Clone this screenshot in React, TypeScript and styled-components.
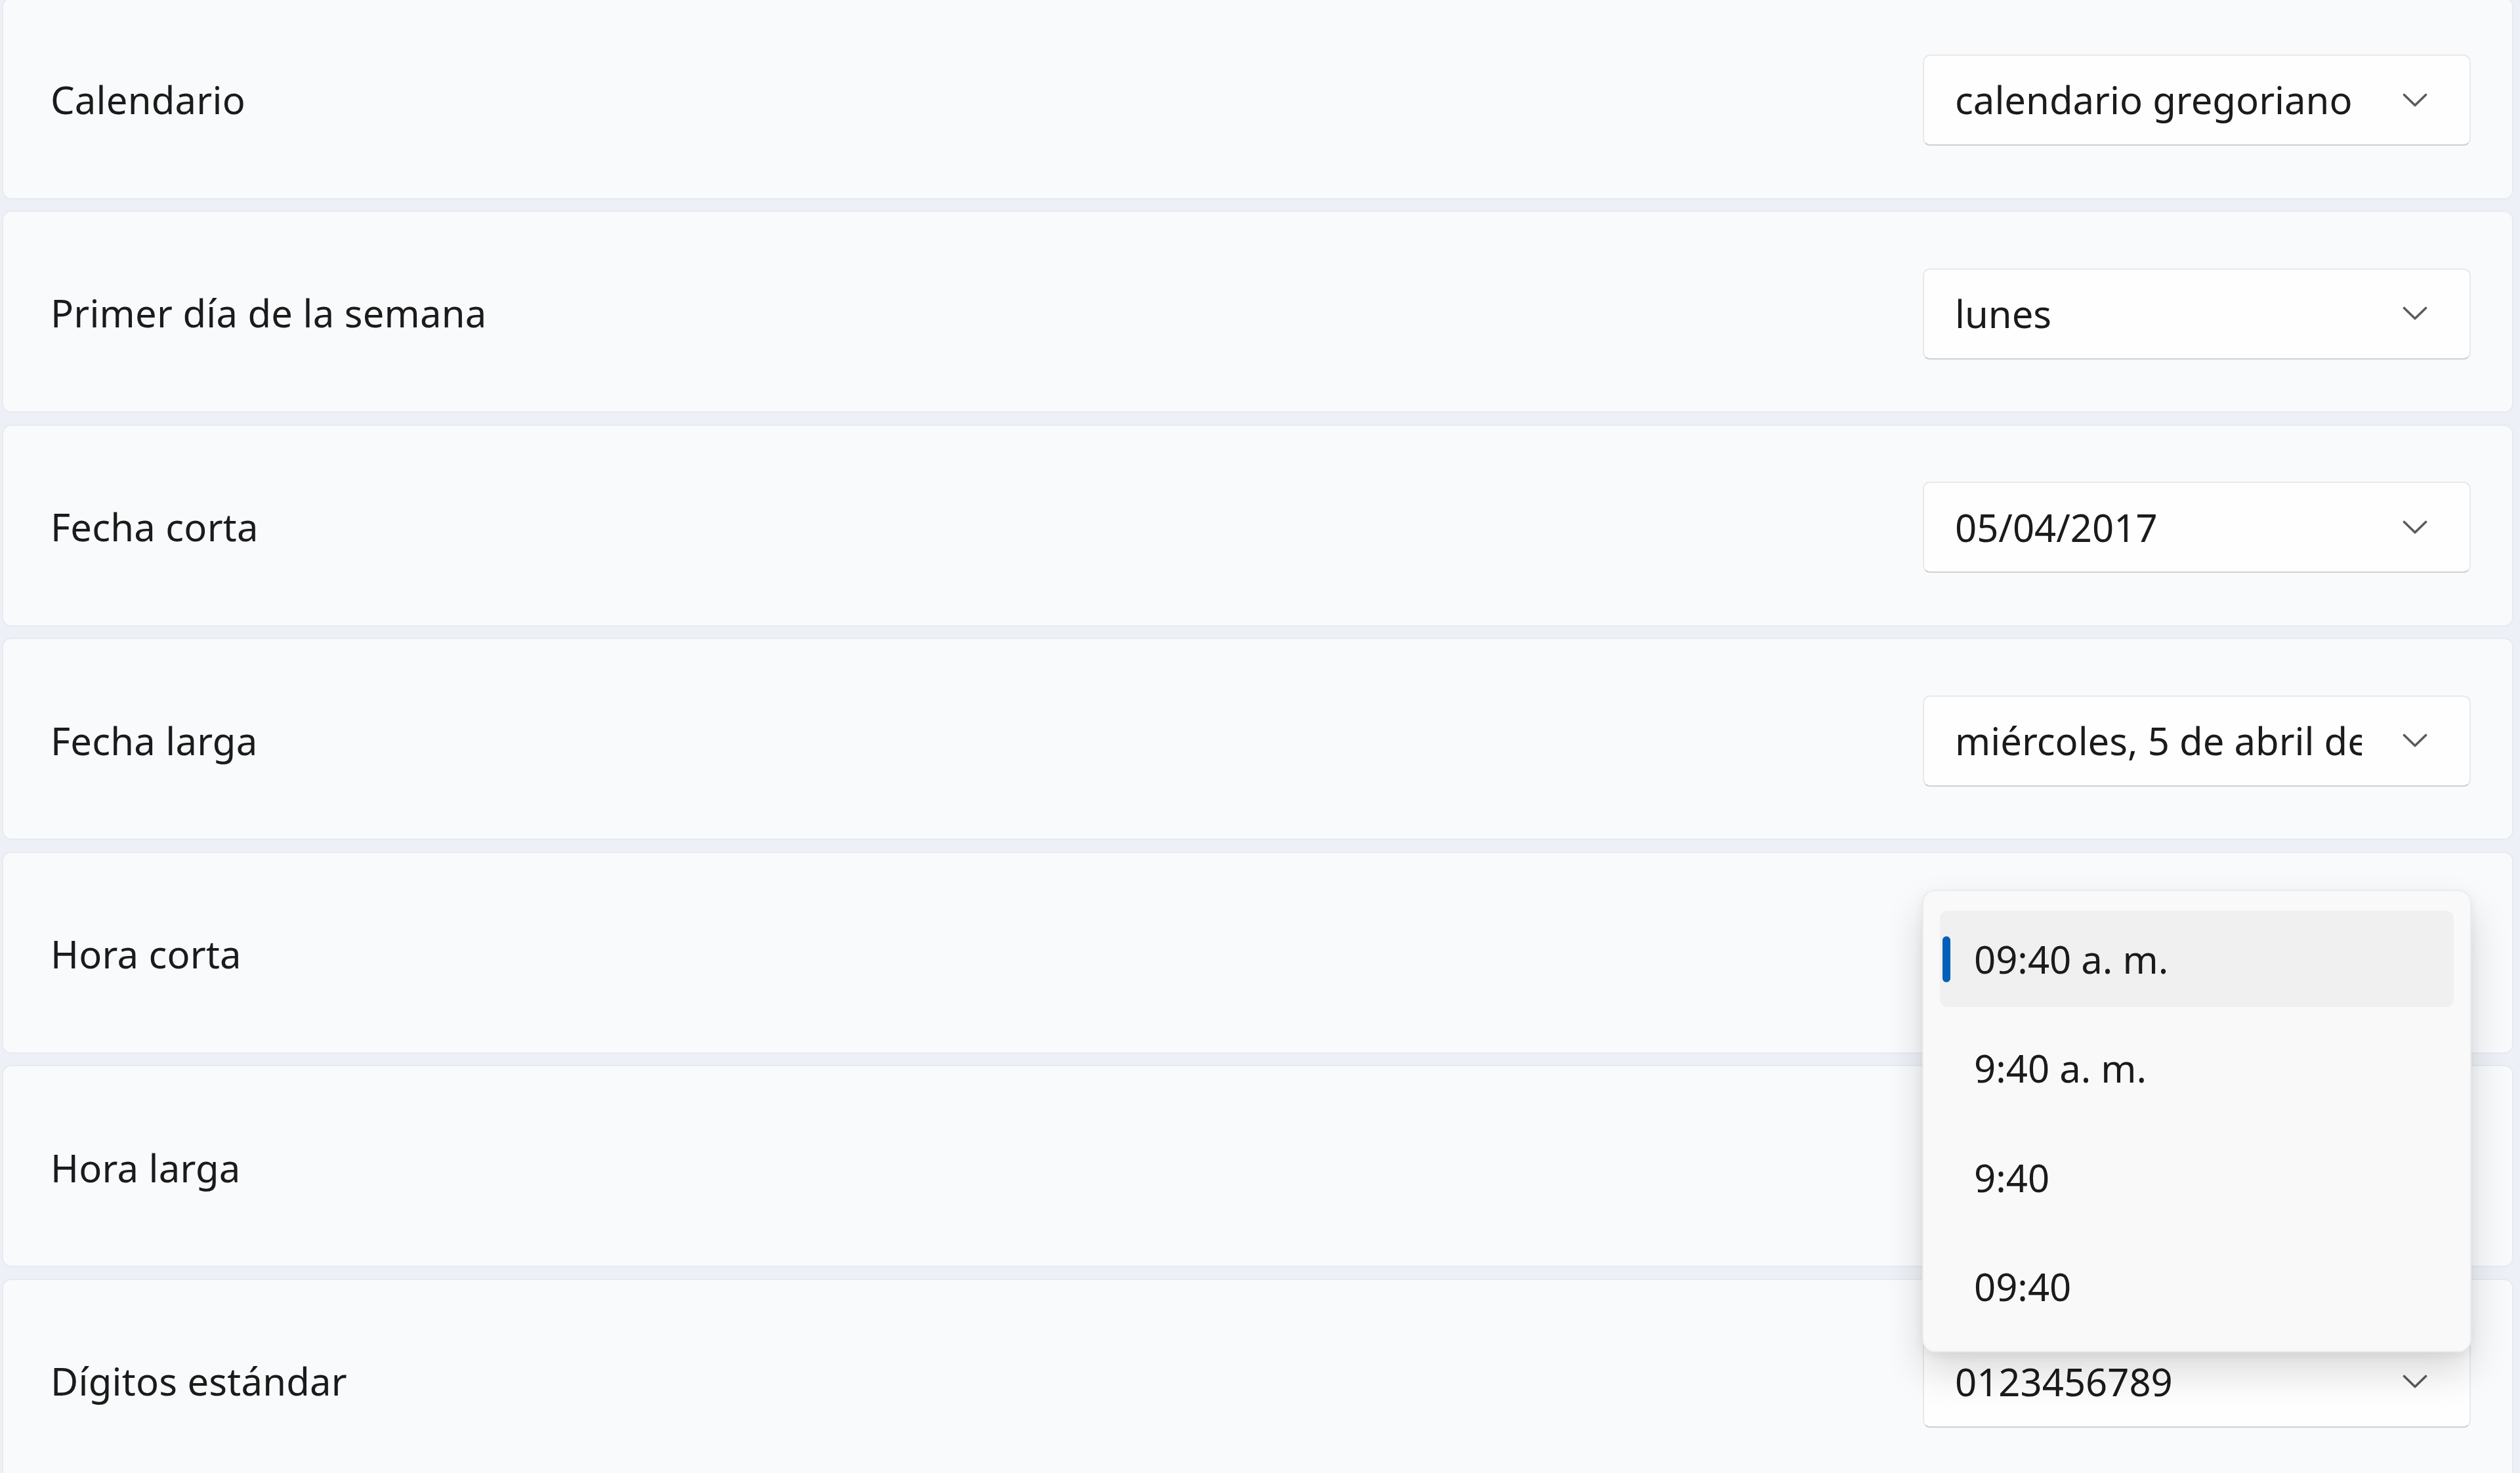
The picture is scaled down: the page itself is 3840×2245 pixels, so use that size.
import * as React from "react";
import styled, { createGlobalStyle } from "styled-components";

const Global = createGlobalStyle`
  html, body {
    margin: 0;
    padding: 0;
    background: #edf1f7;
    overflow: hidden;
  }
  body {
    font-family: "Noto Sans", "Open Sans", "Liberation Sans", sans-serif;
    color: #1b1b1b;
  }
`;

const Page = styled.div`
  width: 3840px;
  height: 2245px;
  overflow: hidden;
  box-sizing: border-box;
  padding: 0 10px 0 3px;
`;

const List = styled.div`
  display: flex;
  flex-direction: column;
  gap: 17.6px;
  margin-top: -4.5px;
`;

const Card = styled.div<{ $raised?: boolean }>`
  position: relative;
  z-index: ${(p) => (p.$raised ? 2 : 1)};
  height: 308px;
  box-sizing: border-box;
  display: flex;
  align-items: center;
  justify-content: space-between;
  padding: 0 63px 0 72px;
  background: #f9fafc;
  border: 2px solid #e7eaef;
  border-radius: 14px;
`;

const Label = styled.div`
  font-size: 58px;
  line-height: 1.3;
  letter-spacing: 0.2px;
  margin-top: 4px;
`;

const Anchor = styled.div`
  position: relative;
  margin-top: 6px;
`;

const Select = styled.div`
  width: 835px;
  height: 139px;
  box-sizing: border-box;
  display: flex;
  align-items: center;
  padding: 0 64px 0 47px;
  gap: 62px;
  background: #fefefe;
  border: 2px solid #e9e9e9;
  border-bottom-color: #d0d0d0;
  border-radius: 11px;
`;

const Value = styled.div`
  flex: 1;
  overflow: hidden;
  white-space: nowrap;
  font-size: 58px;
  line-height: 1.35;
`;

const Chevron = () => (
  <svg width="38" height="22" viewBox="0 0 38 22" fill="none">
    <path
      d="M2.5 2.5 L19 18.5 L35.5 2.5"
      stroke="#5b5b5b"
      strokeWidth="3.6"
      strokeLinecap="round"
      strokeLinejoin="round"
    />
  </svg>
);

const Menu = styled.div`
  position: absolute;
  top: -29px;
  left: -1px;
  width: 837px;
  height: 705px;
  box-sizing: border-box;
  padding: 30px 25px;
  display: flex;
  flex-direction: column;
  gap: 19.5px;
  background: #f9f9f9;
  border: 2px solid #ececec;
  border-radius: 20px;
  box-shadow: 0 30px 60px rgba(0, 0, 0, 0.14), 0 6px 16px rgba(0, 0, 0, 0.06);
`;

const Option = styled.div<{ $selected?: boolean }>`
  position: relative;
  height: 147px;
  flex: none;
  display: flex;
  align-items: center;
  padding-left: 52px;
  border-radius: 12px;
  background: ${(p) => (p.$selected ? "#f0f0f0" : "transparent")};
  font-size: 58px;
  line-height: 1;
`;

const Indicator = styled.span`
  position: absolute;
  left: 4px;
  top: 39px;
  width: 12px;
  height: 70px;
  border-radius: 6px;
  background: #005fb8;
`;

type Row = { label: string; value: string; menu?: string[] };

const rows: Row[] = [
  { label: "Calendario", value: "calendario gregoriano" },
  { label: "Primer día de la semana", value: "lunes" },
  { label: "Fecha corta", value: "05/04/2017" },
  { label: "Fecha larga", value: "miércoles, 5 de abril de 2017" },
  {
    label: "Hora corta",
    value: "09:40 a. m.",
    menu: ["09:40 a. m.", "9:40 a. m.", "9:40", "09:40"],
  },
  { label: "Hora larga", value: "09:40:00 a. m." },
  { label: "Dígitos estándar", value: "0123456789" },
];

export default function App() {
  return (
    <Page>
      <Global />
      <List>
        {rows.map((r) => (
          <Card key={r.label} $raised={!!r.menu}>
            <Label>{r.label}</Label>
            <Anchor>
              <Select>
                <Value>{r.value}</Value>
                <Chevron />
              </Select>
              {r.menu && (
                <Menu>
                  {r.menu.map((m, i) => (
                    <Option key={m} $selected={i === 0}>
                      {i === 0 && <Indicator />}
                      {m}
                    </Option>
                  ))}
                </Menu>
              )}
            </Anchor>
          </Card>
        ))}
      </List>
    </Page>
  );
}
